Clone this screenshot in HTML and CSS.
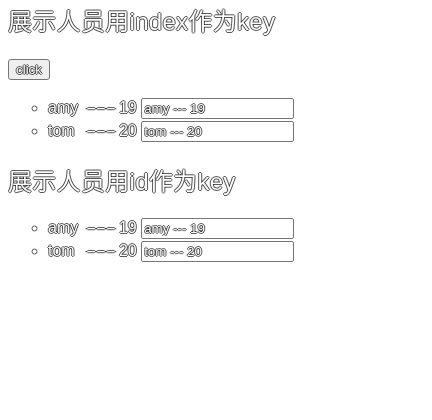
FILE: index.html
```html
<!DOCTYPE html>
<html>
<head>
<meta charset="utf-8">
<link rel="stylesheet" href="styles.css">
</head>
<body>
<div class="app">
  <h2 class="title title-first">展示人员用index作为key</h2>
  <button class="btn">click</button>
  <ul class="list list-first">
    <li class="item"><span class="name">amy</span> <span class="dash">---</span> 19 <input class="field" type="text" value="amy --- 19"></li>
    <li class="item"><span class="name">tom</span> <span class="dash">---</span> 20 <input class="field" type="text" value="tom --- 20"></li>
  </ul>
  <h2 class="title title-second">展示人员用id作为key</h2>
  <ul class="list">
    <li class="item"><span class="name">amy</span> <span class="dash">---</span> 19 <input class="field" type="text" value="amy --- 19"></li>
    <li class="item"><span class="name">tom</span> <span class="dash">---</span> 20 <input class="field" type="text" value="tom --- 20"></li>
  </ul>
</div>
</body>
</html>
```
FILE: styles.css
```css
body {
  margin: 8px;
  font-family: "Liberation Sans", "Noto Sans CJK SC", sans-serif;
  background: #fff;
  color: #fff;
}
.app {
  will-change: transform;
  text-shadow: -1px 0 rgba(0, 0, 0, 0.65), 1px 0 rgba(0, 0, 0, 0.65), 0 -1px rgba(0, 0, 0, 0.65), 0 1px rgba(0, 0, 0, 0.65);
}
.title {
  margin: 0;
  font-size: 24px;
  line-height: 28px;
  font-weight: normal;
  letter-spacing: 0.3px;
}
.title-first {
  margin-bottom: 23px;
}
.title-second {
  margin-top: 26px;
  margin-bottom: 20px;
}
.btn {
  display: block;
  box-sizing: border-box;
  height: 21px;
  margin: 0 0 16px 0;
  padding: 0 7px;
  font-family: "Liberation Sans", sans-serif;
  font-size: 13.33px;
  color: #fff;
  text-shadow: inherit;
  background: #efefef;
  border: 1px solid #767676;
  border-radius: 3px;
}
.list {
  margin: 0;
  padding-left: 40px;
  list-style-type: circle;
}
.list-first {
  margin-bottom: 26px;
}
.item {
  height: 23px;
  line-height: 23px;
  font-size: 16px;
}
.item::marker {
  color: #555;
}
.name {
  display: inline-block;
  width: 30px;
}
.dash {
  display: inline-block;
  width: 16px;
  transform: scaleX(1.85);
  margin: 0 5.4px 0 10.6px;
}
.field {
  box-sizing: border-box;
  width: 153px;
  height: 21px;
  margin: 2px 0 0 0;
  padding: 1px 2px;
  vertical-align: top;
  font-family: "Liberation Sans", sans-serif;
  font-size: 13.33px;
  color: #fff;
  text-shadow: inherit;
  background: #fff;
  border: 1px solid #767676;
  border-radius: 2px;
}
```
